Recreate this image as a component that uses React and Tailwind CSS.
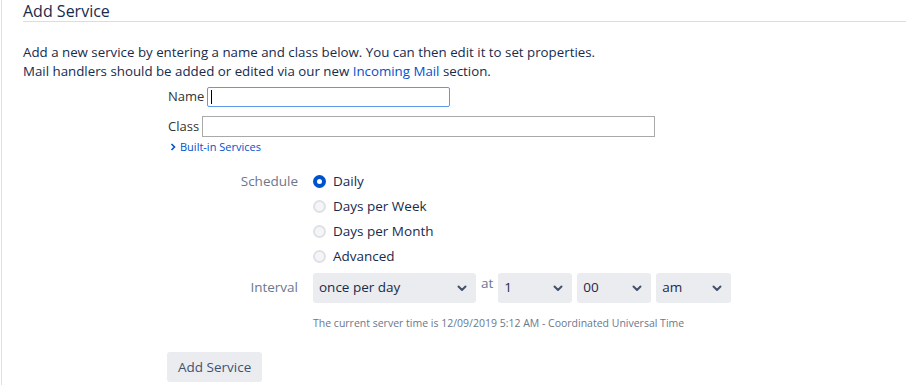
import React from 'react';

const font = { fontFamily: '"Open Sans", "Noto Sans", Arial, sans-serif' };

function Chevron() {
  return (
    <svg width="12" height="12" viewBox="0 0 12 12" className="text-[#42526e]">
      <path d="M2.5 4.5 L6 8 L9.5 4.5" fill="none" stroke="currentColor" strokeWidth="2" strokeLinecap="round" strokeLinejoin="round" />
    </svg>
  );
}

function Select({ value, width }) {
  return (
    <div className={`${width} h-[30px] bg-[#ebecf0] rounded-[3px] flex items-center justify-between pl-[6px] pr-[8px] text-[13.5px] text-[#172b4d]`}>
      <span>{value}</span>
      <Chevron />
    </div>
  );
}

function Radio({ label, checked }) {
  return (
    <div className="h-[25px] flex items-center gap-[7px]">
      {checked ? (
        <span className="w-[13px] h-[13px] rounded-full bg-[#0052cc] flex items-center justify-center">
          <span className="w-[5px] h-[5px] rounded-full bg-white" />
        </span>
      ) : (
        <span className="w-[13px] h-[13px] rounded-full bg-[#f4f5f7] border-2 border-[#dfe1e6]" />
      )}
      <span className="text-[13.5px] text-[#172b4d]">{label}</span>
    </div>
  );
}

export default function App() {
  return (
    <div className="w-[908px] h-[385px] bg-white overflow-hidden pl-px" style={font}>
      <div className="h-full border-l border-[#e1e1e1] pl-[21px]">
        {/* Heading */}
        <h1 className="pt-[1px] h-[22px] text-[16px] leading-[20px] text-[#172b4d] border-b border-[#dddddd] mr-[2px]">
          Add Service
        </h1>

        <div className="mt-[21px] text-[13.3px] leading-[19px] text-[#172b4d]">
          <p>Add a new service by entering a name and class below. You can then edit it to set properties.</p>
          <p>
            Mail handlers should be added or edited via our new{' '}
            <span className="text-[#0052cc]">Incoming Mail</span> section.
          </p>
        </div>

        {/* Name / Class */}
        <div className="ml-[145px] mt-[6px] text-[13px] text-[#333333]">
          <div className="flex items-center gap-[3px] h-[20px]">
            <span>Name</span>
            <div className="w-[243px] h-[20px] border border-[#5b9ae6] rounded-[2px] bg-white flex items-center pl-[3px]">
              <span className="w-px h-[14px] bg-[#000]" />
            </div>
          </div>
          <div className="flex items-center gap-[3px] h-[21px] mt-[9px]">
            <span>Class</span>
            <div className="w-[453px] h-[21px] border border-[#a9a9a9] bg-white" />
          </div>
          <div className="mt-[2px] flex items-center gap-[4px] text-[11px] text-[#0052cc] pl-[2px]">
            <svg width="6" height="8" viewBox="0 0 6 8">
              <path d="M1.5 1 L4.5 4 L1.5 7" fill="none" stroke="currentColor" strokeWidth="1.6" />
            </svg>
            <span>Built-in Services</span>
          </div>
        </div>

        {/* Schedule */}
        <div className="mt-[13px] grid grid-cols-[275px_1fr] gap-x-[15px]">
          <div className="text-right text-[13.5px] text-[#6b778c] h-[25px] leading-[25px]">Schedule</div>
          <div>
            <Radio label="Daily" checked />
            <Radio label="Days per Week" />
            <Radio label="Days per Month" />
            <Radio label="Advanced" />
          </div>

          <div className="text-right text-[13.5px] text-[#6b778c] mt-[4px] h-[30px] leading-[28px]">Interval</div>
          <div className="mt-[4px]">
            <div className="flex items-start">
              <Select value="once per day" width="w-[163px]" />
              <span className="text-[13.5px] text-[#6b778c] mx-[5px] leading-[20px]">at</span>
              <Select value="1" width="w-[74px]" />
              <div className="w-[5px]" />
              <Select value="00" width="w-[74px]" />
              <div className="w-[5px]" />
              <Select value="am" width="w-[75px]" />
            </div>
            <p className="mt-[13px] text-[10.5px] text-[#6b778c]">
              The current server time is 12/09/2019 5:12 AM - Coordinated Universal Time
            </p>
          </div>
        </div>

        <button className="ml-[144px] mt-[21px] h-[30px] px-[11px] bg-[#ebecf0] rounded-[3px] text-[13.5px] text-[#42526e]">
          Add Service
        </button>
      </div>
    </div>
  );
}
